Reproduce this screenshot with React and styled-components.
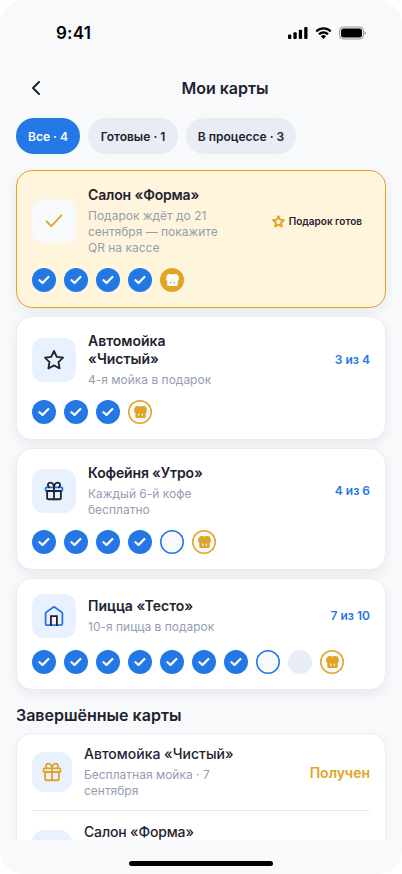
import React from 'react'
import styled, { createGlobalStyle } from 'styled-components'

const blue = '#2378e6'
const gold = '#e0a526'
const ink = '#1f2230'
const surface = '#f7f9fb'

const cards = [
    {
        title: 'Салон «Форма»',
        text: 'Подарок ждёт до 21\nсентября — покажите\nQR на кассе',
        icon: 'check',
        ready: true,
        tight: true,
        stamps: ['done', 'done', 'done', 'done', 'gift-ready'],
    },
    {
        title: 'Автомойка\n«Чистый»',
        text: '4-я мойка в подарок',
        icon: 'star',
        progress: '3 из 4',
        stamps: ['done', 'done', 'done', 'gift'],
    },
    {
        title: 'Кофейня «Утро»',
        text: 'Каждый 6-й кофе\nбесплатно',
        icon: 'gift',
        tight: true,
        progress: '4 из 6',
        stamps: ['done', 'done', 'done', 'done', 'next', 'gift'],
    },
    {
        title: 'Пицца «Тесто»',
        text: '10-я пицца в подарок',
        icon: 'home',
        progress: '7 из 10',
        stamps: ['done', 'done', 'done', 'done', 'done', 'done', 'done', 'next', 'empty', 'gift'],
    },
]

const finished = [
    { title: 'Автомойка «Чистый»', text: 'Бесплатная мойка · 7\nсентября', status: 'Получен' },
    { title: 'Салон «Форма»', tight: true },
]

const StarIcon = ({ size, color, width }) => (
    <svg width={size} height={size} viewBox="0 0 24 24" fill="none" stroke={color} strokeWidth={width} strokeLinejoin="round">
        <path d="M12 2.2l3 6.300 6.900 1-5 4.800 1.200 6.900-6.100-3.300-6.100 3.300 1.200-6.900-5-4.800 6.900-1z" />
    </svg>
)

const GiftIcon = ({ color, band }) => (
    <svg width="22" height="22" viewBox="0 0 24 24" fill="none" stroke={color} strokeWidth="2" strokeLinecap="round" strokeLinejoin="round">
        <rect x="2.800" y="8" width="18.400" height="4" rx="1" stroke={band} />
        <path d="M4.500 12v7.500A1.500 1.500 0 0 0 6 21h12a1.500 1.500 0 0 0 1.500-1.500V12z" />
        <path d="M12 8.500V21" />
        <path d="M12 8.800C12 5 10.300 2.800 8 2.800A2.700 2.700 0 0 0 5.300 5.500c0 1 .5 1.900 1.400 2.400" />
        <path d="M12 8.800C12 5 13.700 2.800 16 2.800a2.700 2.700 0 0 1 2.700 2.700c0 1-.5 1.900-1.400 2.400" />
    </svg>
)

const HomeIcon = () => (
    <svg width="22" height="22" viewBox="0 0 22 22" fill="none" strokeWidth="1.8" strokeLinejoin="round" strokeLinecap="round">
        <path d="M2.600 8.700Q2.600 7.600 3.500 7L11 1.800 18.500 7Q19.400 7.600 19.400 8.700V18.400a1.700 1.700 0 0 1-1.700 1.700H4.300A1.700 1.700 0 0 1 2.600 18.400z" stroke={blue} />
        <path d="M7.900 21V11.200h6V21" stroke={ink} strokeLinejoin="miter" strokeLinecap="butt" />
    </svg>
)

const icons = {
    check: (
        <svg width="22" height="22" viewBox="0 0 22 22" fill="none" stroke={gold} strokeWidth="1.700" strokeLinecap="round" strokeLinejoin="round">
            <path d="M3.500 11.300L8.300 16.200 18.500 5.400" />
        </svg>
    ),
    star: <StarIcon size={22} color={ink} width={2} />,
    gift: <GiftIcon color={ink} band={blue} />,
    home: <HomeIcon />,
}

const StampGift = ({ color, hole }) => (
    <svg width="13" height="12" viewBox="0 0 13 12" fill={color}>
        <rect x="1.200" width="5" height="4" rx="1.600" />
        <rect x="6.800" width="5" height="4" rx="1.600" />
        <rect x="3" y=".6" width="7" height="3" />
        <rect x=".2" y="1.600" width="12.600" height="5.200" rx="1.500" />
        <rect x="1.300" y="4" width="10.400" height="8" rx="1.600" />
        <path stroke={hole} strokeWidth="1.200" strokeLinecap="round" d="M4.700 8v1.200M8.300 8v1.200" />
    </svg>
)

const Stamp = ({ kind }) => (
    <StampCircle $kind={kind}>
        {kind === 'done' && (
            <svg width="12" height="12" viewBox="0 0 12 12" fill="none" stroke="#fff" strokeWidth="2.200" strokeLinecap="round" strokeLinejoin="round">
                <path d="M1.500 6.200L4.500 9 10.400 3" />
            </svg>
        )}
        {kind === 'gift' && <StampGift color={gold} hole={surface} />}
        {kind === 'gift-ready' && <StampGift color="#fff" hole={gold} />}
    </StampCircle>
)

function StatusBar() {
    return (
        <StatusBarStyled>
            <span>9:41</span>
            <svg width="78" height="14" viewBox="0 0 78 14">
                <rect x="0" y="8.500" width="3.300" height="4.500" rx="1" />
                <rect x="5.400" y="6.300" width="3.300" height="6.700" rx="1" />
                <rect x="10.800" y="3.700" width="3.300" height="9.300" rx="1" />
                <rect x="16.200" y="1" width="3.300" height="12" rx="1" />
                <path d="M35.500 3.600c2.300 0 4.500.9 6.200 2.500.1.100.3.100.4 0l1.200-1.200c.1-.1.100-.3 0-.5a11.300 11.300 0 0 0-15.600 0c-.1.200-.1.400 0 .5l1.200 1.200c.1.100.3.100.4 0a9 9 0 0 1 6.200-2.500zm0 4.100c1.300 0 2.500.5 3.400 1.300.1.100.3.100.5 0l1.200-1.200c.1-.1.100-.3 0-.5a7.300 7.300 0 0 0-10.200 0c-.1.200-.1.400 0 .5L31.600 9c.2.100.4.100.5 0 .9-.8 2.100-1.300 3.400-1.300zm2.400 2.800c.1-.1.100-.3 0-.5a3.700 3.700 0 0 0-4.800 0c-.1.200-.1.400 0 .5l2.100 2.200c.200.100.4.100.5 0z" />
                <rect x="51.500" y="1" width="24" height="12" rx="3.800" fill="none" stroke="#000" strokeOpacity=".4" />
                <rect x="53" y="2.500" width="21" height="9" rx="2.500" />
                <path d="M76.600 5.200v3.800a2 2 0 0 0 0-3.800z" opacity=".4" />
            </svg>
        </StatusBarStyled>
    )
}

function App() {
    return (
        <Screen>
            <GlobalStyle />
            <StatusBar />
            <Header>
                <BackButton aria-label="Назад">
                    <svg width="20" height="20" viewBox="0 0 20 20" fill="none" stroke={ink} strokeWidth="2" strokeLinecap="round" strokeLinejoin="round">
                        <path d="M13 4L7 10l6 6" />
                    </svg>
                </BackButton>
                <h1>Мои карты</h1>
            </Header>
            <Filters>
                <Chip $width={64} $active>Все · 4</Chip>
                <Chip $width={90}>Готовые · 1</Chip>
                <Chip $width={110}>В процессе · 3</Chip>
            </Filters>
            <Content>
                <CardList>
                    {cards.map((card) => (
                        <Card key={card.title} $ready={card.ready}>
                            <CardTop>
                                <IconBox $size={44} $plain={card.ready}>{icons[card.icon]}</IconBox>
                                <CardText $tight={card.tight}>
                                    <h2>{card.title}</h2>
                                    <p>{card.text}</p>
                                </CardText>
                                {card.ready ? (
                                    <ReadyBadge>
                                        <StarIcon size={13} color={gold} width={3.6} />
                                        Подарок готов
                                    </ReadyBadge>
                                ) : (
                                    <Progress>{card.progress}</Progress>
                                )}
                            </CardTop>
                            <Stamps>
                                {card.stamps.map((kind, i) => <Stamp key={i} kind={kind} />)}
                            </Stamps>
                        </Card>
                    ))}
                </CardList>
                <SectionTitle>Завершённые карты</SectionTitle>
                <FinishedList>
                    {finished.map((item) => (
                        <FinishedRow key={item.title}>
                            <IconBox $size={40}><GiftIcon color={gold} band={gold} /></IconBox>
                            <FinishedText $tight={item.tight}>
                                <h3>{item.title}</h3>
                                <p>{item.text}</p>
                            </FinishedText>
                            {item.status && <Received>{item.status}</Received>}
                        </FinishedRow>
                    ))}
                </FinishedList>
            </Content>
            <HomeBar />
        </Screen>
    )
}

const GlobalStyle = createGlobalStyle`
    * {
        box-sizing: border-box;
        margin: 0;
        padding: 0;
    }

    body {
        background: #ffffff;
        color: ${ink};
        font-family: Inter, "Liberation Sans", sans-serif;
    }

    svg {
        display: block;
        flex: none;
    }
`;

const Screen = styled.div`
    width: 402px;
    height: 874px;
    display: flex;
    flex-direction: column;
    background: ${surface};
    border-radius: 24px;
    overflow: hidden;
`;

const StatusBarStyled = styled.div`
    flex: none;
    height: 66px;
    padding: 0 36px 0 56px;
    display: flex;
    align-items: center;
    justify-content: space-between;
    color: #000000;
    font-size: 17px;
    font-weight: 600;
    letter-spacing: 0.2px;
`;

const Header = styled.header`
    flex: none;
    height: 44px;
    padding: 0 16px;
    display: flex;
    align-items: center;
    gap: 8px;
    h1 {
        flex: 1;
        text-align: center;
        font-size: 16px;
        line-height: 20px;
        font-weight: 600;
    }
`;

const BackButton = styled.button`
    width: 40px;
    height: 40px;
    display: flex;
    align-items: center;
    justify-content: center;
    background: none;
    border: none;
`;

const Filters = styled.nav`
    flex: none;
    display: flex;
    gap: 8px;
    padding: 8px 16px 0;
`;

const Chip = styled.button`
    width: ${({ $width }) => $width}px;
    height: 36px;
    border: none;
    border-radius: 18px;
    background: ${({ $active }) => ($active ? blue : '#e8edf5')};
    color: ${({ $active }) => ($active ? '#ffffff' : ink)};
    font-family: inherit;
    font-size: 12px;
    font-weight: 600;
    white-space: nowrap;
`;

const Content = styled.main`
    flex: none;
    height: 686px;
    padding: 16px 16px 0;
    overflow: hidden;
`;

const CardList = styled.div`
    display: flex;
    flex-direction: column;
    gap: 8px;
`;

const Card = styled.section`
    display: flex;
    flex-direction: column;
    gap: 12px;
    padding: 15px;
    border: 1px solid ${({ $ready }) => ($ready ? gold : '#e8edf5')};
    border-radius: 16px;
    background: ${({ $ready }) => ($ready ? '#fff5dc' : '#ffffff')};
    box-shadow: 0 4px 12px rgba(31, 34, 48, 0.07);
`;

const CardTop = styled.div`
    display: flex;
    align-items: center;
    gap: 12px;
`;

const IconBox = styled.div`
    flex: none;
    width: ${({ $size }) => $size}px;
    height: ${({ $size }) => $size}px;
    display: flex;
    align-items: center;
    justify-content: center;
    border-radius: 12px;
    background: ${({ $plain }) => ($plain ? surface : '#e9f1fe')};
`;

const CardText = styled.div`
    flex: 1;
    white-space: pre;
    h2 {
        font-size: 14px;
        line-height: 18px;
        font-weight: 600;
        letter-spacing: ${({ $tight }) => ($tight ? '-0.15px' : 'normal')};
    }
    p {
        margin-top: 4px;
        color: #959db0;
        font-size: 12px;
        line-height: 16px;
    }
`;

const Progress = styled.span`
    color: ${blue};
    font-size: 12px;
    font-weight: 600;
    line-height: 16px;
`;

const ReadyBadge = styled.span`
    display: flex;
    align-items: center;
    gap: 4px;
    padding-right: 8px;
    font-size: 10px;
    font-weight: 600;
    line-height: 14px;
`;

const Stamps = styled.div`
    display: flex;
    gap: 8px;
`;

const stampStyles = {
    done: `background: ${blue};`,
    next: `background: ${surface}; box-shadow: inset 0 0 0 1.5px ${blue};`,
    empty: 'background: #e8edf5;',
    gift: `background: ${surface}; box-shadow: inset 0 0 0 1.5px ${gold};`,
    'gift-ready': `background: ${gold};`,
}

const StampCircle = styled.div`
    width: 24px;
    height: 24px;
    display: flex;
    align-items: center;
    justify-content: center;
    border-radius: 50%;
    ${({ $kind }) => stampStyles[$kind]}
`;

const SectionTitle = styled.h2`
    margin: 15px 0 8px;
    font-size: 16px;
    line-height: 20px;
    font-weight: 600;
`;

const FinishedList = styled.div`
    padding: 0 15px;
    border: 1px solid #e8edf5;
    border-radius: 16px;
    background: #ffffff;
    box-shadow: 0 4px 12px rgba(31, 34, 48, 0.04);
`;

const FinishedRow = styled.div`
    height: 76px;
    display: flex;
    align-items: center;
    gap: 12px;
    & + & {
        height: 79px;
        border-top: 1px solid #e8eaee;
    }
`;

const FinishedText = styled.div`
    flex: 1;
    white-space: pre;
    h3 {
        font-size: 14px;
        line-height: 18px;
        font-weight: 500;
        letter-spacing: ${({ $tight }) => ($tight ? '-0.15px' : 'normal')};
    }
    p {
        min-height: 32px;
        margin-top: 4px;
        color: #959db0;
        font-size: 12px;
        line-height: 16px;
    }
`;

const Received = styled.span`
    color: ${gold};
    font-size: 14px;
    font-weight: 600;
`;

const HomeBar = styled.div`
    width: 144px;
    height: 5px;
    margin: 21px auto 0;
    border-radius: 3px;
    background: #000000;
`;

export default App
